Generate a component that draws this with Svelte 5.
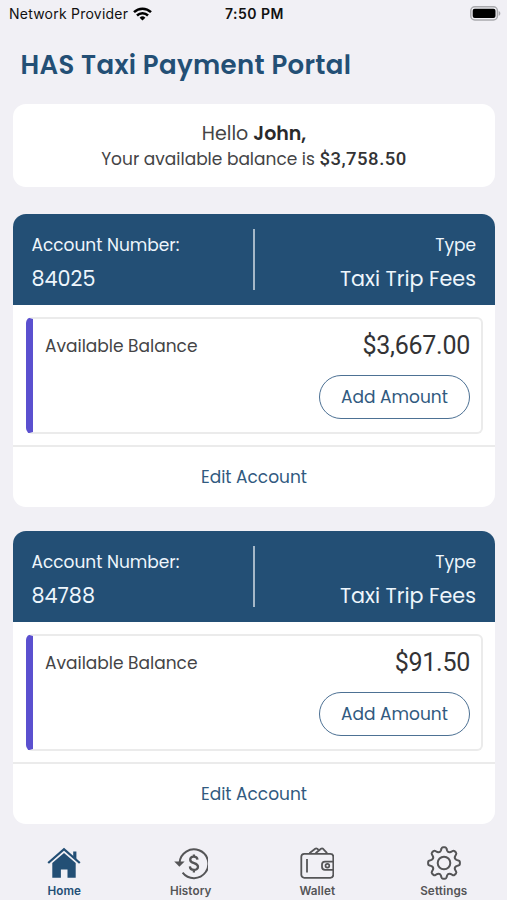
<script lang="ts">
  interface Account {
    number: string;
    type: string;
    balance: string;
  }

  const accounts: Account[] = [
    { number: "84025", type: "Taxi Trip Fees", balance: "$3,667.00" },
    { number: "84788", type: "Taxi Trip Fees", balance: "$91.50" },
  ];

  const tabs = ["Home", "History", "Wallet", "Settings"];
  let activeTab = $state("Home");

  // Closed gear outline: teeth and valleys joined by smooth curves
  function gearPath() {
    const point = (radius: number, degrees: number) => {
      const angle = (degrees * Math.PI) / 180;
      const x = 17 + radius * Math.cos(angle);
      const y = 17 + radius * Math.sin(angle);
      return `${x.toFixed(2)} ${y.toFixed(2)}`;
    };
    let path = `M${point(12, -108)}`;
    for (let i = 0; i < 8; i++) {
      const a = i * 45 - 90;
      path += `L${point(14.6, a - 10)}Q${point(15.9, a - 8)} ${point(15.9, a - 4)}`;
      path += `L${point(15.9, a + 4)}Q${point(15.9, a + 8)} ${point(14.6, a + 10)}`;
      path += `L${point(12.8, a + 14)}Q${point(11, a + 22.5)} ${point(12.8, a + 31)}`;
    }
    return path.replace(/^M[^L]+L/, "M") + "Z";
  }
</script>

<div class="screen">
  <div class="status-bar">
    <div class="carrier">
      <span>Network Provider</span>
      <svg width="19" height="14" viewBox="0 0 19 14" fill="none" stroke="#000" stroke-width="2.5">
        <path d="M1 5.2C5.8.6 13.2.6 18 5.2" />
        <path d="M4 8.5C7 5.6 12 5.6 15 8.5" />
        <path d="M6.6 10.7a4.2 4.2 0 0 1 5.8 0L9.5 13.6Z" fill="#000" stroke="none" />
      </svg>
    </div>
    <div class="time">7:50 PM</div>
    <div class="battery">
      <svg width="31" height="15" viewBox="0 0 31 15">
        <rect x=".8" y=".8" width="26.6" height="13.2" rx="4" fill="none" stroke="#a9a9ad" stroke-width="1.5" />
        <rect x="2.7" y="2.7" width="22.8" height="9.4" rx="2" fill="#000" />
        <path d="M28.7 5v4.8c2.2-.8 2.2-4 0-4.8Z" fill="#a9a9ad" />
      </svg>
    </div>
  </div>

  <h1>HAS Taxi Payment Portal</h1>

  <section class="summary">
    <p class="hello">Hello <b>John,</b></p>
    <p class="total">Your available balance is <strong>$3,758.50</strong></p>
  </section>

  {#each accounts as account}
    <section class="account">
      <header>
        <div class="field">
          <span class="label">Account Number:</span>
          <span class="value">{account.number}</span>
        </div>
        <div class="separator"></div>
        <div class="field right">
          <span class="label">Type</span>
          <span class="value">{account.type}</span>
        </div>
      </header>
      <div class="balance">
        <span class="balance-label">Available Balance</span>
        <div class="balance-side">
          <span class="amount">{account.balance}</span>
          <button class="add">Add Amount</button>
        </div>
      </div>
      <button class="edit">Edit Account</button>
    </section>
  {/each}

  <nav>
    {#each tabs as tab}
      <button class="tab" class:active={activeTab === tab} onclick={() => (activeTab = tab)}>
        <svg width="34" height="34" viewBox="0 0 34 34" fill="none" stroke="currentColor" stroke-width="2">
          {#if tab === "Home"}
            <path d="M1.2 17 17 3.2 32.8 17" stroke-width="2.3" />
            <path d="M26.2 5.4h3.2v7.8l-3.2-2.8Z" fill="currentColor" stroke="none" />
            <path d="M5.3 16.9 17 6.9l11.7 10v14.8h-8.2v-8.2h-6.6v8.2H5.3Z" fill="currentColor" stroke="none" />
          {:else if tab === "History"}
            <path d="M5.6 16.5A14.4 14.4 0 1 1 8.6 26.6" />
            <path d="M.2 15.4h10.4l-5.2 5.4Z" fill="currentColor" stroke="none" />
            <path d="M23.5 13.6c-.5-4.2-7.3-4-7.3.1 0 4.4 7.8 2.5 7.8 7 0 4.4-7.9 4.3-8.1-.3M19.9 8.5V11M19.9 23.8v2.7" stroke-width="2.3" />
          {:else if tab === "Wallet"}
            <rect x="1.3" y="7.8" width="32" height="24" rx="3" stroke-width="1.8" />
            <path d="M7 13v13.5M33 15.6h-8a3 3 0 0 0-3 3v2.2a3 3 0 0 0 3 3h8" stroke-width="1.8" />
            <circle cx="27.4" cy="19.7" r="1.9" stroke-width="1.7" />
            <path d="m9.4 7.2 5.8-4.4q1-.7 2 0l1.2.9M15.6 7.2l5.4-4.4q1.1-.8 2.1 0l4 4.4" stroke-width="1.8" />
          {:else}
            <path d={gearPath()} stroke-linejoin="round" />
            <circle cx="17" cy="17" r="6.3" />
          {/if}
        </svg>
        <span>{tab}</span>
      </button>
    {/each}
  </nav>
</div>

<style>
  :global(body) {
    margin: 0;
    background: #f1f0f5;
  }

  .screen {
    display: flex;
    flex-direction: column;
    width: 507px;
    height: 900px;
    overflow: hidden;
    background: #f1f0f5;
    color: #444446;
    font-family: Poppins, Inter, sans-serif;
  }

  h1,
  p {
    margin: 0;
  }

  button {
    padding: 0;
    border: 0;
    background: none;
    color: #315a80;
    font: inherit;
    cursor: pointer;
  }

  .status-bar {
    display: grid;
    grid-template-columns: 1fr auto 1fr;
    align-items: center;
    height: 27px;
    padding: 0 6px 0 9px;
    font-family: Inter, sans-serif;
    font-size: 14px;
    color: #111;
  }

  .carrier {
    display: flex;
    align-items: center;
    gap: 5px;
    letter-spacing: 0.23px;
  }

  .time {
    margin-right: 1px;
    font-weight: 600;
    letter-spacing: 0.5px;
  }

  .battery {
    display: flex;
    justify-content: flex-end;
  }

  h1 {
    height: 77px;
    padding-left: 20.5px;
    font-size: 26px;
    font-weight: 600;
    line-height: 77px;
    letter-spacing: 0.33px;
    color: #234f75;
  }

  .summary {
    height: 83px;
    margin: 0 12px 27px 13px;
    padding-top: 17px;
    box-sizing: border-box;
    border-radius: 13px;
    background: #fff;
    text-align: center;
  }

  .hello {
    font-size: 19px;
    line-height: 25px;
  }

  .hello b {
    font-weight: 600;
    color: #29292b;
  }

  .total {
    font-size: 17px;
    line-height: 26px;
  }

  .total strong {
    font-family: Roboto, sans-serif;
    font-size: 18.5px;
    font-weight: 500;
    letter-spacing: 0.5px;
    color: #333335;
  }

  .account {
    display: flex;
    flex-direction: column;
    height: 293px;
    margin: 0 12px 24px 13px;
    border-radius: 13px;
    overflow: hidden;
    background: #fff;
  }

  header {
    display: grid;
    grid-template-columns: 1fr 2px 1fr;
    height: 91px;
    padding: 15px 19px 15px 18.5px;
    box-sizing: border-box;
    background: #234f75;
    color: #eef6fc;
  }

  .separator {
    height: 61px;
    background: #a5b8c8;
  }

  .field {
    display: flex;
    flex-direction: column;
  }

  .right {
    align-items: flex-end;
  }

  .label {
    font-size: 17px;
    line-height: 32px;
  }

  .value {
    font-size: 20.7px;
    line-height: 35px;
  }

  .balance {
    display: flex;
    justify-content: space-between;
    height: 117px;
    margin: 12px 12px 11px 13px;
    padding: 0 11px 0 12px;
    box-sizing: border-box;
    border: 2px solid #ebebeb;
    border-left: 7px solid #5b50cf;
    border-radius: 6px;
  }

  .balance-label {
    font-size: 17px;
    line-height: 54px;
  }

  .balance-side {
    display: flex;
    flex-direction: column;
    align-items: flex-end;
  }

  .amount {
    font-family: Roboto, sans-serif;
    font-size: 25px;
    line-height: 54px;
    letter-spacing: -0.25px;
    color: #333335;
  }

  .add {
    width: 151px;
    height: 44px;
    margin-top: 2px;
    border: 1.5px solid #4d7194;
    border-radius: 22px;
    font-size: 17px;
  }

  .edit {
    flex: 1;
    padding-bottom: 1px;
    border-top: 2px solid #ebebeb;
    font-size: 17px;
  }

  nav {
    display: grid;
    grid-template-columns: repeat(4, 1fr);
    height: 76px;
    margin-top: -24px;
    padding: 22px 0 0 1px;
    box-sizing: border-box;
  }

  .tab {
    display: flex;
    flex-direction: column;
    align-items: center;
    color: #555557;
    font-family: Inter, sans-serif;
    font-size: 11.7px;
    font-weight: 600;
    line-height: 22px;
    letter-spacing: 0.1px;
  }

  .tab.active {
    color: #234f75;
  }
</style>
